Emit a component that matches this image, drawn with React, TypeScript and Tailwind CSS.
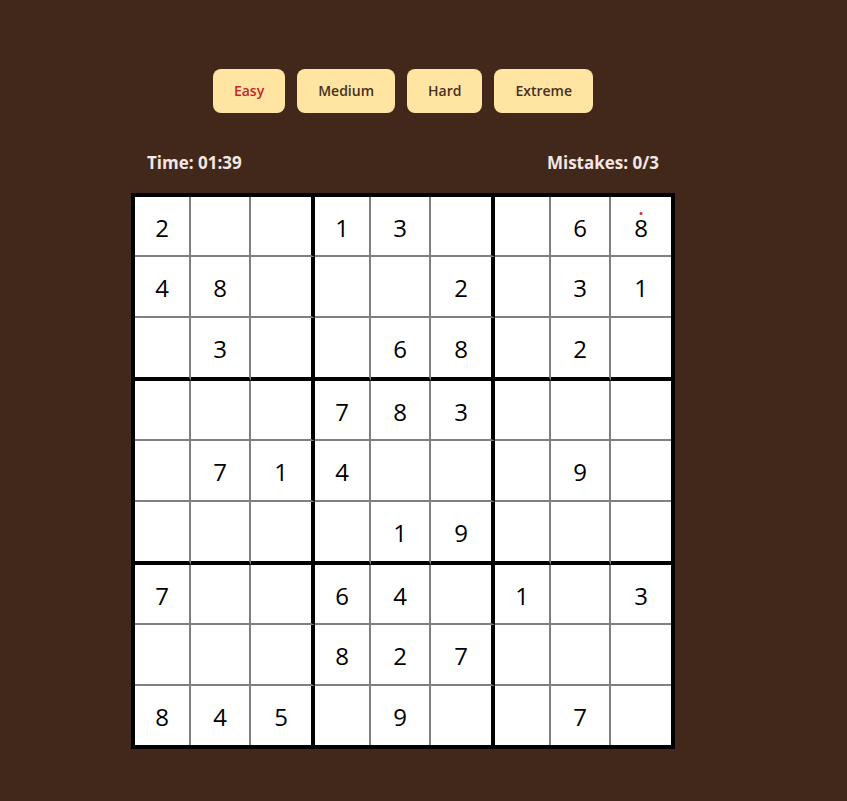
import React from "react";

const board: (number | null)[][] = [
  [2, null, null, 1, 3, null, null, 6, 8],
  [4, 8, null, null, null, 2, null, 3, 1],
  [null, 3, null, null, 6, 8, null, 2, null],
  [null, null, null, 7, 8, 3, null, null, null],
  [null, 7, 1, 4, null, null, null, 9, null],
  [null, null, null, null, 1, 9, null, null, null],
  [7, null, null, 6, 4, null, 1, null, 3],
  [null, null, null, 8, 2, 7, null, null, null],
  [8, 4, 5, null, 9, null, null, 7, null],
];

const rightBorder = [
  "border-r-2 border-r-[#808080]",
  "border-r-2 border-r-[#808080]",
  "border-r-4 border-r-black",
  "border-r-2 border-r-[#808080]",
  "border-r-2 border-r-[#808080]",
  "border-r-4 border-r-black",
  "border-r-2 border-r-[#808080]",
  "border-r-2 border-r-[#808080]",
  "",
];

const bottomBorder = [
  "border-b-2 border-b-[#808080]",
  "border-b-2 border-b-[#808080]",
  "border-b-4 border-b-black",
  "border-b-2 border-b-[#808080]",
  "border-b-2 border-b-[#808080]",
  "border-b-4 border-b-black",
  "border-b-2 border-b-[#808080]",
  "border-b-2 border-b-[#808080]",
  "",
];

const levels = ["Easy", "Medium", "Hard", "Extreme"];

export default function App() {
  return (
    <div className="min-h-screen bg-[#42281a] font-['Open_Sans',sans-serif]">
      <div className="pl-[131px] pt-[69px]">
        <div className="w-[544px] flex flex-col items-center">
          <div className="flex gap-3">
            {levels.map((l, i) => (
              <button
                key={l}
                className={
                  "rounded-lg bg-[#ffe5a1] px-[21px] py-3 text-sm leading-5 font-semibold " +
                  (i === 0 ? "text-[#c2262c]" : "text-[#46301f]")
                }
              >
                {l}
              </button>
            ))}
          </div>
          <div className="mt-[38px] flex w-full justify-between px-4 text-[17px] leading-6 font-bold text-[#f4e6e2]">
            <span>Time: 01:39</span>
            <span>Mistakes: 0/3</span>
          </div>
          <div className="mt-[18px] grid grid-cols-[56px_60px_64px_56px_60px_64px_56px_60px_60px] grid-rows-[60px_61px_63px_60px_61px_63px_60px_61px_59px] border-4 border-black bg-white">
            {board.map((row, r) =>
              row.map((v, c) => (
                <div
                  key={r + "-" + c}
                  className={
                    "relative flex items-center justify-center pt-[3px] text-2xl leading-8 text-black " +
                    rightBorder[c] +
                    " " +
                    bottomBorder[r]
                  }
                >
                  {r === 0 && c === 8 && (
                    <span className="absolute left-1/2 top-[15px] h-[3px] w-[3px] -translate-x-1/2 rounded-full bg-[#e0262b]" />
                  )}
                  {v ?? ""}
                </div>
              ))
            )}
          </div>
        </div>
      </div>
    </div>
  );
}
